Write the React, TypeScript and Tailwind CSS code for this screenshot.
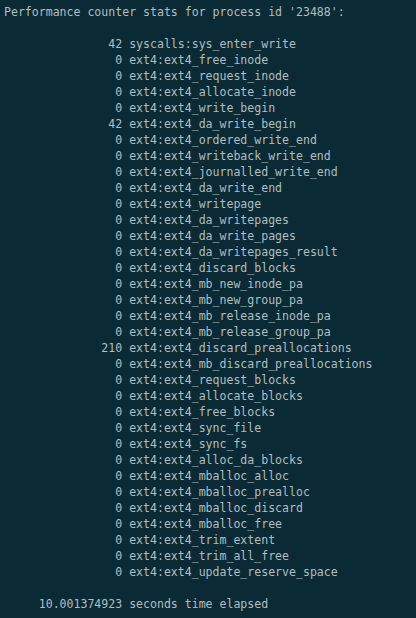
const stats: [string, string][] = [
  ["42", "syscalls:sys_enter_write"],
  ["0", "ext4:ext4_free_inode"],
  ["0", "ext4:ext4_request_inode"],
  ["0", "ext4:ext4_allocate_inode"],
  ["0", "ext4:ext4_write_begin"],
  ["42", "ext4:ext4_da_write_begin"],
  ["0", "ext4:ext4_ordered_write_end"],
  ["0", "ext4:ext4_writeback_write_end"],
  ["0", "ext4:ext4_journalled_write_end"],
  ["0", "ext4:ext4_da_write_end"],
  ["0", "ext4:ext4_writepage"],
  ["0", "ext4:ext4_da_writepages"],
  ["0", "ext4:ext4_da_write_pages"],
  ["0", "ext4:ext4_da_writepages_result"],
  ["0", "ext4:ext4_discard_blocks"],
  ["0", "ext4:ext4_mb_new_inode_pa"],
  ["0", "ext4:ext4_mb_new_group_pa"],
  ["0", "ext4:ext4_mb_release_inode_pa"],
  ["0", "ext4:ext4_mb_release_group_pa"],
  ["210", "ext4:ext4_discard_preallocations"],
  ["0", "ext4:ext4_mb_discard_preallocations"],
  ["0", "ext4:ext4_request_blocks"],
  ["0", "ext4:ext4_allocate_blocks"],
  ["0", "ext4:ext4_free_blocks"],
  ["0", "ext4:ext4_sync_file"],
  ["0", "ext4:ext4_sync_fs"],
  ["0", "ext4:ext4_alloc_da_blocks"],
  ["0", "ext4:ext4_mballoc_alloc"],
  ["0", "ext4:ext4_mballoc_prealloc"],
  ["0", "ext4:ext4_mballoc_discard"],
  ["0", "ext4:ext4_mballoc_free"],
  ["0", "ext4:ext4_trim_extent"],
  ["0", "ext4:ext4_trim_all_free"],
  ["0", "ext4:ext4_update_reserve_space"],
];

export default function App() {
  const lines = [
    "Performance counter stats for process id '23488':",
    "",
    ...stats.map(([n, name]) => n.padStart(17, " ") + " " + name),
    "",
    "     10.001374923 seconds time elapsed",
  ];

  return (
    <div className="w-[416px] h-[618px] overflow-hidden bg-[#0a2b36] pt-[4px] pl-[4px]">
      <pre className="font-['DejaVu_Sans_Mono',monospace] text-[11.55px] leading-[16px] text-[#b3bdbf] m-0">
        {lines.join("\n")}
      </pre>
    </div>
  );
}
